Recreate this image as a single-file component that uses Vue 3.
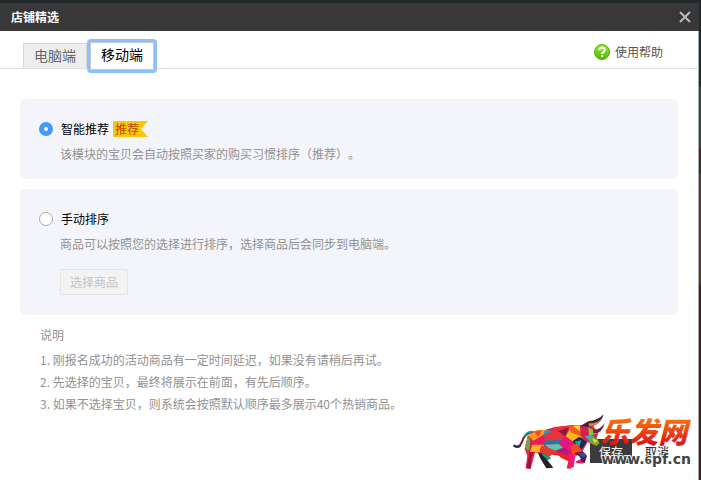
<template>
  <div class="page">
    <section class="dialog">
      <header class="title-bar">
        <h1>店铺精选</h1>
        <button class="close" type="button" aria-label="关闭">
          <svg width="14" height="14" viewBox="0 0 14 14">
            <path d="M2 2L12 12M12 2L2 12" stroke="#b9b9b9" stroke-width="2" />
          </svg>
        </button>
      </header>

      <nav class="tabs">
        <button
          v-for="tab in tabs"
          :key="tab.id"
          type="button"
          class="tab"
          :class="{ active: tab.id === currentTab }"
          @click="currentTab = tab.id"
        >{{ tab.name }}</button>
        <a class="help" href="#">
          <svg width="16" height="16" viewBox="0 0 16 16">
            <defs>
              <linearGradient id="help-fill" x1="0" y1="0" x2="0" y2="1">
                <stop offset="0" stop-color="#a0e63c" />
                <stop offset="1" stop-color="#48bc04" />
              </linearGradient>
            </defs>
            <circle cx="8" cy="8" r="7.5" fill="url(#help-fill)" stroke="#52b010" />
            <path d="M5.4 6.2C5.4 2.8 10.8 2.8 10.8 6C10.8 7.9 8.1 7.8 8.1 10" fill="none" stroke="#fff" stroke-width="2" />
            <circle cx="8.1" cy="12.1" r="1.2" fill="#fff" />
          </svg>
          <span>使用帮助</span>
        </a>
      </nav>

      <main class="content">
        <div class="panel">
          <label class="option">
            <input v-model="mode" type="radio" name="mode" value="auto" />
            <span>智能推荐</span>
            <em class="tag">推荐</em>
          </label>
          <p class="desc">该模块的宝贝会自动按照买家的购买习惯排序（推荐）。</p>
        </div>

        <div class="panel">
          <label class="option">
            <input v-model="mode" type="radio" name="mode" value="manual" />
            <span>手动排序</span>
          </label>
          <p class="desc">商品可以按照您的选择进行排序，选择商品后会同步到电脑端。</p>
          <button class="pick" type="button" :disabled="mode !== 'manual'">选择商品</button>
        </div>

        <div class="notes">
          <h2>说明</h2>
          <p v-for="(note, i) in notes" :key="i">{{ i + 1 }}. {{ note }}</p>
        </div>
      </main>

      <footer class="actions">
        <button class="save" type="button">保存</button>
        <button class="cancel" type="button">取消</button>
        <svg class="watermark" width="196" height="75" viewBox="0 0 588 225">
          <defs>
            <linearGradient id="brand-fill" x1="0" y1="0" x2="0" y2="1">
              <stop offset="0.2" stop-color="#f87a10" />
              <stop offset="0.5" stop-color="#f04a10" />
              <stop offset="0.85" stop-color="#d81418" />
            </linearGradient>
          </defs>
          <!-- tail -->
          <path d="M26 121Q43 134 51 110Q60 78 94 82" fill="none" stroke="#8c1b2c" stroke-width="6" />
          <path d="M26 121Q38 130 46 121" fill="none" stroke="#173d4d" stroke-width="7" />
          <path d="M57 95Q65 80 82 80" fill="none" stroke="#20a4a0" stroke-width="5" />
          <!-- hind legs -->
          <polygon points="68,92 102,78 91,139 77,191 62,190 67,152 59,132" fill="#e9253c" />
          <polygon points="68,96 83,110 70,137 60,129" fill="#74a640" />
          <polygon points="75,139 92,128 80,157 77,191 64,190" fill="#a50d45" />
          <polygon points="91,126 120,137 124,161 145,188 124,190 107,162" fill="#27202e" />
          <polygon points="106,143 126,149 139,160 127,166" fill="#1f9a70" />
          <!-- body -->
          <polygon points="75,88 150,66 200,60 240,66 248,110 232,140 205,158 120,146 75,140" fill="#d8284a" />
          <polygon points="69,92 96,75 126,76 119,94 86,108" fill="#ff9c18" />
          <polygon points="87,80 111,75 100,95" fill="#f34922" />
          <polygon points="119,77 151,75 130,91 112,99" fill="#179dcc" />
          <polygon points="84,108 119,88 115,117 73,141" fill="#ed1667" />
          <polygon points="82,119 119,119 104,142 75,140" fill="#ffb51d" />
          <polygon points="119,88 151,76 181,93 171,105 123,109" fill="#e53542" />
          <polygon points="136,76 160,66 192,63 182,95" fill="#f5283c" />
          <polygon points="160,78 190,68 182,95" fill="#801d42" />
          <polygon points="121,107 172,105 160,116 113,120" fill="#1c78bb" />
          <polygon points="119,119 162,117 203,151 147,141" fill="#5fc5b0" />
          <polygon points="110,121 157,139 132,155 103,137" fill="#e13c2c" />
          <polygon points="181,91 217,117 203,153 162,117" fill="#e6157d" />
          <polygon points="182,94 198,66 231,95 213,116" fill="#f8b913" />
          <polygon points="192,64 224,60 249,76 231,95 197,82" fill="#f05b22" />
          <polygon points="204,64 237,61 229,81" fill="#ffd42b" />
          <polygon points="203,108 223,95 246,112 231,132 215,126" fill="#202a50" />
          <polygon points="209,110 229,106 222,130" fill="#16a8c7" />
          <polygon points="196,123 217,114 231,141 204,158" fill="#f04a20" />
          <polygon points="151,138 176,127 204,151 186,157" fill="#b01b7e" />
          <!-- front legs -->
          <polygon points="149,139 193,151 204,174 195,191 185,190 190,169 168,158" fill="#e8241d" />
          <polygon points="190,145 211,151 206,186 194,191" fill="#f71480" />
          <polygon points="207,145 233,139 246,153 239,174 214,171 228,161 222,153" fill="#5b164f" />
          <polygon points="216,143 242,145 238,160" fill="#2c56a0" />
          <polygon points="213,169 227,164 235,176 214,174" fill="#ed1667" />
          <!-- head and horns -->
          <polygon points="225,61 264,63 280,83 275,99 284,115 274,123 247,111 227,92" fill="#cf2648" />
          <polygon points="227,65 251,65 245,92" fill="#e51662" />
          <polygon points="250,67 279,84 252,94" fill="#8cc543" />
          <polygon points="239,92 269,93 256,112" fill="#38b1ca" />
          <polygon points="256,98 275,99 284,115 274,123 252,112" fill="#74a637" />
          <polygon points="262,99 278,107 269,115" fill="#fdd12a" />
          <path d="M248 65Q285 65 296 28Q279 46 250 49L226 63Z" fill="#42233c" />
          <path d="M251 55Q276 56 289 41Q281 61 252 64Z" fill="#e38931" />
          <path d="M264 75Q291 71 299 53Q293 86 265 85Z" fill="#73213c" />
          <!-- brand text -->
          <text class="brand" x="286" y="114">乐发网</text>
          <text class="site" x="289" y="176">www.<tspan class="small">6</tspan>pf.cn</text>
        </svg>
      </footer>
    </section>
  </div>
</template>

<script setup>
import { ref } from 'vue'

const tabs = [
  { id: 'pc', name: '电脑端' },
  { id: 'mobile', name: '移动端' }
]
const currentTab = ref('mobile')
const mode = ref('auto')

const notes = [
  '刚报名成功的活动商品有一定时间延迟，如果没有请稍后再试。',
  '先选择的宝贝，最终将展示在前面，有先后顺序。',
  '如果不选择宝贝，则系统会按照默认顺序最多展示40个热销商品。'
]
</script>

<style>
body {
  margin: 0;
}
</style>

<style scoped>
.page {
  box-sizing: border-box;
  display: flex;
  min-height: 100vh;
  padding: 3px 2px 0 0;
  background: linear-gradient(#23282b 86px, #3e4142 87px, #3e4142 148px, #4b2226 149px, #4b2226 173px, #4d3f20 174px, #4d3f20 284px, #3f1f22 285px);
  font-family: "Noto Sans CJK SC", sans-serif;
  font-size: 12px;
  line-height: 18px;
  text-spacing-trim: space-all;
}

button {
  font-family: inherit;
}

.dialog {
  display: flex;
  flex: 1;
  flex-direction: column;
  background: #fff;
}

.title-bar {
  display: flex;
  align-items: center;
  justify-content: space-between;
  height: 28px;
  padding: 0 7px 0 11px;
  background: #383838;
}

.title-bar h1 {
  margin: 0;
  color: #fff;
  font-size: 12px;
}

.close {
  display: flex;
  padding: 0;
  border: 0;
  background: none;
}

.tabs {
  display: flex;
  align-items: flex-end;
  gap: 3px;
  height: 37px;
  padding-left: 23px;
  border-right: 1px solid #a5abae;
  border-bottom: 1px solid #ddd;
}

.tab {
  height: 25px;
  padding: 0 10px 2px;
  border: 1px solid #d8d8d8;
  border-bottom: 0;
  background: #eee;
  color: #666;
  font-size: 14px;
  line-height: 22px;
}

.tab.active {
  height: 28px;
  margin-bottom: -2px;
  padding-bottom: 4px;
  border: 1px solid #c3cbd6;
  border-radius: 1px;
  outline: 3px solid #8bc0fa;
  background: #fff;
  color: #000;
}

.help {
  display: flex;
  align-items: center;
  align-self: center;
  gap: 5px;
  margin: 4px 35px 0 auto;
  color: #555;
  text-decoration: none;
}

.content {
  flex: 1;
  padding: 30px 20px 0;
  border-right: 1px solid #a5abae;
}

.panel {
  margin-bottom: 10px;
  padding: 21px 19px 16px;
  border-radius: 5px;
  background: #f4f5fa;
}

.panel + .panel {
  padding-bottom: 20px;
}

.option {
  display: flex;
  align-items: center;
  color: #000;
}

.option input {
  width: 14px;
  height: 14px;
  margin: 0 8px 0 0;
  border: 1px solid #aaa;
  border-radius: 50%;
  appearance: none;
  background: #fff;
}

.option input:checked {
  border: 5px solid #429afc;
}

.tag {
  width: 33px;
  height: 16px;
  margin-left: 4px;
  padding-left: 2px;
  background: #fcc70a;
  clip-path: polygon(0 0, 100% 0, 80% 50%, 100% 100%, 0 100%);
  color: #b84b0c;
  font-style: normal;
  line-height: 16px;
}

.desc {
  margin: 7px 0 0 21px;
  color: #929292;
}

.pick {
  height: 26px;
  margin: 16px 0 0 21px;
  padding: 0 9px;
  border: 1px solid #e4e4e4;
  border-radius: 1px;
  background: #f3f3f3;
  color: #c4c4c4;
  font-size: 12px;
  line-height: 24px;
}

.notes {
  padding: 1px 20px 0;
  color: #929292;
}

.notes h2 {
  margin: 0 0 5px;
  font-size: 12px;
  font-weight: normal;
}

.notes p {
  margin: 0;
  line-height: 22px;
}

.actions {
  position: relative;
  display: flex;
  justify-content: flex-end;
  padding: 0 20px 17px 0;
  border-right: 1px solid #a5abae;
}

.save,
.cancel {
  width: 42px;
  height: 24px;
  padding: 0;
  border: 0;
  background: #3b3b3b;
  color: #fff;
  font-size: 12px;
}

.cancel {
  width: 46px;
  padding-left: 4px;
  background: #fff;
  color: #111;
}

.watermark {
  position: absolute;
  right: -3px;
  bottom: 0;
}

.brand {
  fill: url(#brand-fill);
  font-size: 87px;
  font-style: italic;
  font-weight: 900;
}

.site {
  fill: #444;
  stroke: #fff;
  stroke-width: 5px;
  paint-order: stroke;
  font-family: "DejaVu Sans", sans-serif;
  font-size: 42px;
  font-weight: bold;
}

.small {
  font-size: 32px;
}
</style>
